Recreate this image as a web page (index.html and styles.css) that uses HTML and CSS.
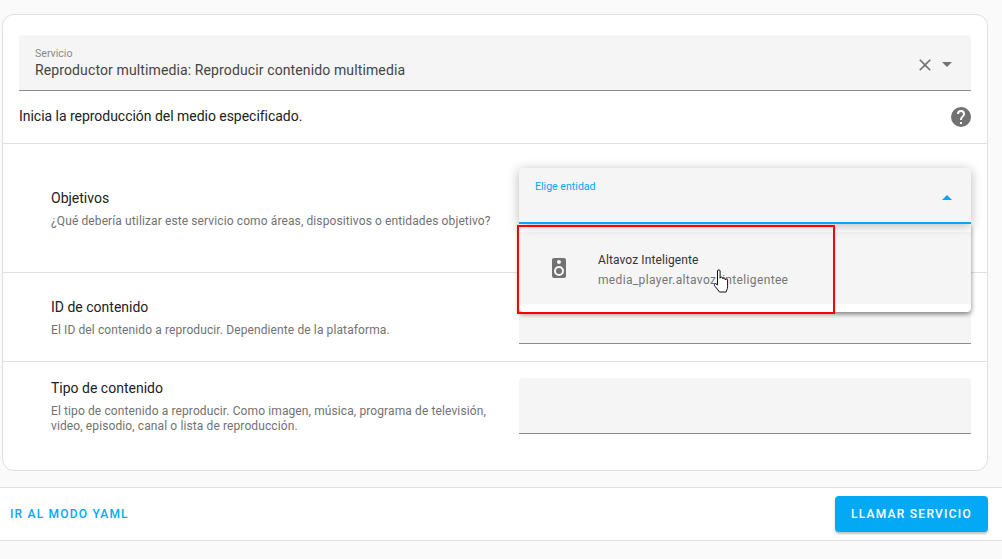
FILE: index.html
```html
<!DOCTYPE html>
<html lang="es">
<head>
<meta charset="utf-8">
<title>Llamar servicio</title>
<link rel="stylesheet" href="styles.css">
</head>
<body>
<main class="page">
  <section class="card">
    <div class="top">
      <div class="field field-service">
        <div class="field-text">
          <span class="field-label">Servicio</span>
          <span class="field-value">Reproductor multimedia: Reproducir contenido multimedia</span>
        </div>
        <svg class="icon-close" viewBox="0 0 24 24"><path d="M19,6.41L17.59,5L12,10.59L6.41,5L5,6.41L10.59,12L5,17.59L6.41,19L12,13.41L17.59,19L19,17.59L13.41,12L19,6.41Z"/></svg>
        <svg class="icon-arrow" viewBox="0 0 24 24"><path d="M7,10L12,15L17,10H7Z"/></svg>
      </div>
      <div class="description">
        <span class="description-text">Inicia la reproducción del medio especificado.</span>
        <svg class="icon-help" viewBox="0 0 24 24"><path d="M15.07,11.25L14.17,12.17C13.45,12.89 13,13.5 13,15H11V14.5C11,13.39 11.45,12.39 12.17,11.67L13.41,10.41C13.78,10.05 14,9.55 14,9C14,7.89 13.1,7 12,7A2,2 0 0,0 10,9H8A4,4 0 0,1 12,5A4,4 0 0,1 16,9C16,9.88 15.64,10.67 15.07,11.25M13,19H11V17H13M12,2A10,10 0 0,0 2,12A10,10 0 0,0 12,22A10,10 0 0,0 22,12C22,6.47 17.5,2 12,2Z"/></svg>
      </div>
    </div>

    <div class="row row-target">
      <div class="row-text">
        <h3 class="row-title">Objetivos</h3>
        <p class="row-desc">¿Qué debería utilizar este servicio como áreas, dispositivos o entidades objetivo?</p>
      </div>
      <div class="control">
        <div class="field field-open">
          <div class="field-text">
            <span class="field-label field-label-active">Elige entidad</span>
          </div>
          <svg class="icon-arrow icon-arrow-up" viewBox="0 0 24 24"><path d="M7,15L12,10L17,15H7Z"/></svg>
        </div>
        <div class="menu">
          <div class="menu-item">
            <svg class="icon-speaker" viewBox="0 0 24 24"><path d="M12,12A3,3 0 0,0 9,15A3,3 0 0,0 12,18A3,3 0 0,0 15,15A3,3 0 0,0 12,12M12,20A5,5 0 0,1 7,15A5,5 0 0,1 12,10A5,5 0 0,1 17,15A5,5 0 0,1 12,20M12,4A2,2 0 0,1 14,6A2,2 0 0,1 12,8C10.89,8 10,7.1 10,6C10,4.89 10.89,4 12,4M17,2H7C5.89,2 5,2.89 5,4V20A2,2 0 0,0 7,22H17A2,2 0 0,0 19,20V4C19,2.89 18.1,2 17,2Z"/></svg>
            <div class="menu-text">
              <span class="menu-primary">Altavoz Inteligente</span>
              <span class="menu-secondary">media_player.altavoz_inteligentee</span>
            </div>
          </div>
        </div>
        <div class="highlight"></div>
        <svg class="cursor" viewBox="0 0 19 26"><path d="M4.5 2c0-1.6 2.6-1.6 2.6 0v7.2c0-1.5 2.6-1.5 2.6 0v.8c0-1.4 2.5-1.4 2.5 0v1c0-1.3 2.4-1.3 2.4 0v6.5c0 2.5-1 4-1.6 5.5H6.5C5 21 3.5 19 2 17.3 .8 15.8 1.3 14.4 2.7 14.6l1.8 1.4z"/></svg>
      </div>
    </div>

    <div class="row row-id">
      <div class="row-text">
        <h3 class="row-title">ID de contenido</h3>
        <p class="row-desc">El ID del contenido a reproducir. Dependiente de la plataforma.</p>
      </div>
      <div class="control">
        <div class="field"></div>
      </div>
    </div>

    <div class="row row-type">
      <div class="row-text">
        <h3 class="row-title">Tipo de contenido</h3>
        <p class="row-desc">El tipo de contenido a reproducir. Como imagen, música, programa de televisión, video, episodio, canal o lista de reproducción.</p>
      </div>
      <div class="control">
        <div class="field"></div>
      </div>
    </div>
  </section>

  <footer class="footer">
    <a class="link-button">IR AL MODO YAML</a>
    <button class="primary-button" type="button">LLAMAR SERVICIO</button>
  </footer>
</main>
</body>
</html>
```

FILE: styles.css
```css
* { box-sizing: border-box; }

html, body {
  margin: 0;
  height: 100%;
}

body {
  background: #fafafa;
  color: #212121;
  font-family: Roboto, "Liberation Sans", sans-serif;
  font-size: 14px;
  overflow: hidden;
}

.page {
  padding: 14px 0 0;
}

.card {
  margin: 0 14px 0 2px;
  background: #fff;
  border: 1px solid #e0e0e0;
  border-radius: 12px;
}

.top {
  padding: 20px 16px 0;
  border-bottom: 1px solid #e0e0e0;
}

.field {
  display: flex;
  align-items: flex-start;
  height: 56px;
  background: #f5f5f5;
  border-bottom: 1px solid #8c8c8c;
  border-radius: 4px 4px 0 0;
}

.field-text {
  flex: 1;
  display: flex;
  flex-direction: column;
  padding: 11px 16px 0;
}

.field-label {
  height: 14px;
  padding-top: 1px;
  font-size: 10.6px;
  line-height: 14px;
  color: #8a8a8a;
}

.field-label-active {
  color: #03a9f4;
}

.field-value {
  font-size: 14px;
  line-height: 20px;
  letter-spacing: 0.12px;
  color: #444;
}

.icon-close {
  width: 20px;
  height: 20px;
  margin-top: 20px;
  margin-left: 1px;
  fill: #727272;
  flex: none;
}

.icon-arrow {
  width: 24px;
  height: 24px;
  margin: 17px 12px 0 0;
  fill: #727272;
  flex: none;
}

.icon-arrow-up {
  fill: #03a9f4;
}

.description {
  display: flex;
  align-items: center;
  justify-content: space-between;
  height: 52px;
}

.description-text {
  margin-bottom: 2px;
  letter-spacing: -0.03px;
}

.icon-help {
  width: 24px;
  height: 24px;
  margin-right: -2px;
  fill: #727272;
}

.row {
  display: flex;
  padding-left: 48px;
  padding-right: 16px;
  border-bottom: 1px solid #e0e0e0;
}

.row-type {
  border-bottom: 0;
}

.row-text {
  flex: 1;
  min-width: 0;
  padding-right: 20px;
}

.row-title {
  margin: 0 0 6px;
  font-size: 14px;
  font-weight: 400;
  line-height: 20px;
}

.row-desc {
  margin: 0;
  font-size: 12px;
  line-height: 15px;
  letter-spacing: 0.11px;
  color: #727272;
}

.control {
  position: relative;
  flex: none;
  width: 452px;
}

.row-target { padding-top: 24px; padding-bottom: 24px; }
.row-target .row-text { padding-top: 20px; }
.row-target .control { padding-bottom: 24px; }
.row-id { padding-top: 15px; padding-bottom: 17px; }
.row-id .row-text { padding-top: 9px; }
.row-type { padding-top: 16px; padding-bottom: 36px; }

.field-open {
  position: relative;
  z-index: 2;
  border-bottom: 2px solid #03a9f4;
  box-shadow: 0 2px 12px rgba(0, 0, 0, 0.28);
}

.field-open .field-text {
  padding-top: 11px;
}

.menu {
  position: absolute;
  z-index: 1;
  top: 56px;
  left: 0;
  right: 0;
  height: 88px;
  padding: 8px 0;
  background: #fff;
  border-radius: 0 0 4px 4px;
  box-shadow: 0 2px 5px rgba(0, 0, 0, 0.5);
}

.menu-item {
  display: flex;
  align-items: center;
  height: 72px;
  padding-left: 28px;
  background: #f5f5f5;
}

.icon-speaker {
  width: 24px;
  height: 24px;
  fill: #727272;
  flex: none;
}

.menu-text {
  display: flex;
  flex-direction: column;
  margin-left: 27px;
  padding-top: 3px;
}

.menu-primary {
  font-size: 12px;
  line-height: 20px;
  letter-spacing: 0.1px;
  color: #333;
}

.menu-secondary {
  font-size: 12px;
  line-height: 20px;
  letter-spacing: 0.35px;
  color: #757575;
}

.highlight {
  position: absolute;
  z-index: 3;
  top: 57px;
  left: -2px;
  width: 318px;
  height: 89px;
  border: 2px solid #f00;
}

.cursor {
  position: absolute;
  z-index: 4;
  top: 101px;
  left: 194px;
  width: 19px;
  height: 26px;
  fill: #fff;
  stroke: #111;
  stroke-width: 1;
}

.footer {
  display: flex;
  align-items: center;
  justify-content: space-between;
  margin-top: 16px;
  padding: 8px 14px 8px 10px;
  background: #fff;
  border-top: 1px solid #e0e0e0;
  border-bottom: 1px solid #e0e0e0;
}

.link-button {
  font-size: 12px;
  font-weight: 500;
  letter-spacing: 1.2px;
  color: #03a9f4;
}

.primary-button {
  width: 153px;
  height: 36px;
  padding: 0;
  font-family: inherit;
  font-size: 12px;
  font-weight: 500;
  letter-spacing: 1.25px;
  color: #fff;
  background: #03a9f4;
  border: 0;
  border-radius: 4px;
  box-shadow: 0 2px 2px rgba(0, 0, 0, 0.24);
}
```
